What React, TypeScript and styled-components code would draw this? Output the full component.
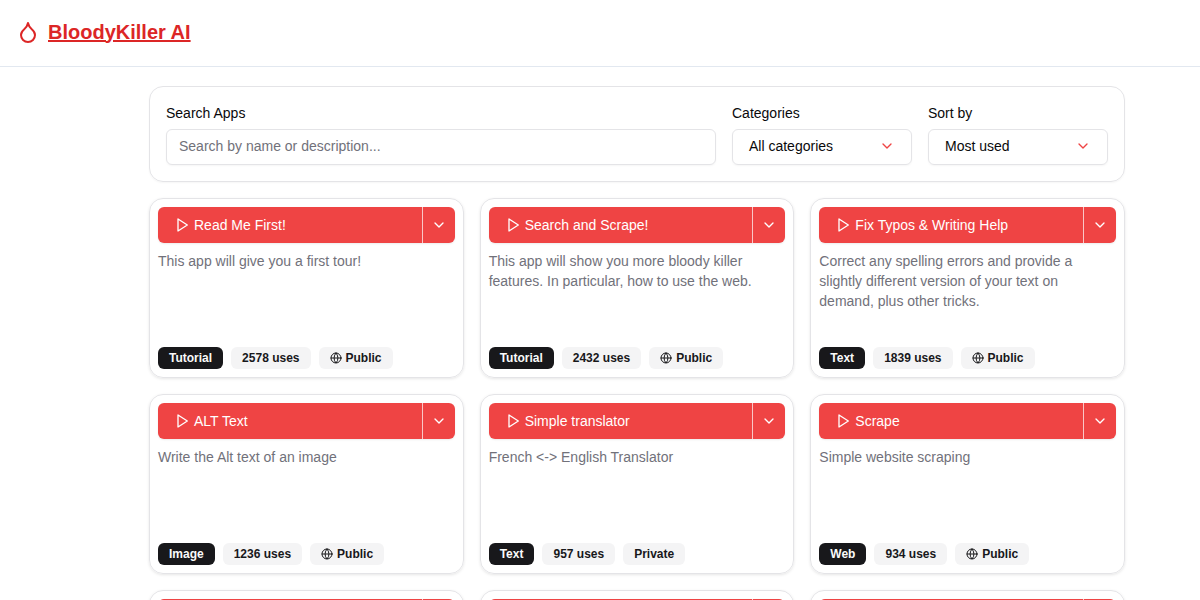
import React from "react";
import styled, { createGlobalStyle } from "styled-components";

const Global = createGlobalStyle`
  html, body { margin: 0; padding: 0; background: #fff; overflow: hidden; }
  * { box-sizing: border-box; }
  body { font-family: "Liberation Sans", Arial, sans-serif; color: #09090b; }
`;

const Page = styled.div`
  width: 1200px;
  height: 600px;
  overflow: hidden;
`;
const Header = styled.header`
  height: 67px;
  border-bottom: 1px solid #e2e8f0;
  display: flex;
  align-items: center;
  padding: 0 0 3px 16px;
  gap: 8px;
`;
const Brand = styled.a`
  font-size: 20px;
  font-weight: 700;
  line-height: 28px;
  color: #dc2626;
  text-decoration: underline;
`;
const Main = styled.main`
  width: 976px;
  margin: 19px 0 0 149px;
  display: flex;
  flex-direction: column;
  gap: 16px;
`;
const Filters = styled.section`
  height: 96px;
  border: 1px solid #e4e4e7;
  border-radius: 14px;
  box-shadow: 0 1px 2px rgba(0, 0, 0, 0.04);
  padding: 16px;
  display: grid;
  grid-template-columns: 550px 180px 180px;
  column-gap: 16px;
`;
const Field = styled.div`
  display: flex;
  flex-direction: column;
  gap: 6px;
`;
const Label = styled.label`
  font-size: 14px;
  line-height: 20px;
  color: #09090b;
`;
const Input = styled.input`
  height: 36px;
  border: 1px solid #e4e4e7;
  border-radius: 6px;
  padding: 0 12px 2px;
  font: 14px "Liberation Sans", Arial, sans-serif;
  box-shadow: 0 1px 2px rgba(0, 0, 0, 0.04);
  outline: none;
  &::placeholder { color: #71717a; opacity: 1; }
`;
const Select = styled.div`
  height: 36px;
  border: 1px solid #e4e4e7;
  border-radius: 6px;
  padding: 0 16px 2px;
  font-size: 14px;
  box-shadow: 0 1px 2px rgba(0, 0, 0, 0.04);
  display: flex;
  align-items: center;
  justify-content: space-between;
`;
const Grid = styled.div`
  display: grid;
  grid-template-columns: repeat(3, 1fr);
  gap: 16px;
`;
const Card = styled.article`
  height: 180px;
  border: 1px solid #e4e4e7;
  border-radius: 14px;
  box-shadow: 0 1px 3px rgba(0, 0, 0, 0.1);
  padding: 8px;
  display: flex;
  flex-direction: column;
`;
const ButtonRow = styled.div`
  height: 36px;
  display: flex;
  flex: none;
  background: #ef4444;
  border-radius: 6px;
  box-shadow: 0 1px 2px rgba(0, 0, 0, 0.08);
  color: #fff;
`;
const RunButton = styled.div`
  flex: 1;
  min-width: 0;
  display: flex;
  align-items: center;
  gap: 4px;
  padding-left: 16px;
  font-size: 14px;
`;
const MenuButton = styled.div`
  width: 33px;
  border-left: 1px solid rgba(255, 255, 255, 0.7);
  display: flex;
  align-items: center;
  justify-content: center;
`;
const Description = styled.p`
  margin: 8px 0 0;
  font-size: 14px;
  line-height: 20px;
  color: #71717a;
  flex: 1;
`;
const Badges = styled.div`
  display: flex;
  gap: 8px;
`;
const Badge = styled.span<{ $dark?: boolean }>`
  height: 22px;
  padding: 0 11px;
  border-radius: 6px;
  display: inline-flex;
  align-items: center;
  gap: 4px;
  font-size: 12px;
  font-weight: 700;
  background: ${(p) => (p.$dark ? "#18181b" : "#f4f4f5")};
  color: ${(p) => (p.$dark ? "#fafafa" : "#18181b")};
`;

const Drop = () => (
  <svg width="24" height="24" viewBox="0 0 24 24" fill="none" stroke="#dc2626" strokeWidth="2" strokeLinecap="round" strokeLinejoin="round">
    <path d="M12 22a7 7 0 0 0 7-7c0-2-1-3.9-3-5.5s-3.5-4-4-6.5c-.5 2.5-2 4.9-4 6.5C6 11.1 5 13 5 15a7 7 0 0 0 7 7z" />
  </svg>
);
const Chevron = ({ color = "#fff" }: { color?: string }) => (
  <svg width="16" height="16" viewBox="0 0 24 24" fill="none" stroke={color} strokeWidth="2" strokeLinecap="round" strokeLinejoin="round">
    <path d="m6 9 6 6 6-6" />
  </svg>
);
const Play = () => (
  <svg width="16" height="16" viewBox="0 0 24 24" fill="none" stroke="#fff" strokeWidth="2" strokeLinecap="round" strokeLinejoin="round">
    <polygon points="6 3 20 12 6 21 6 3" />
  </svg>
);
const Globe = () => (
  <svg width="12" height="12" viewBox="0 0 24 24" fill="none" stroke="#18181b" strokeWidth="2" strokeLinecap="round" strokeLinejoin="round">
    <circle cx="12" cy="12" r="10" />
    <path d="M12 2a14.5 14.5 0 0 0 0 20 14.5 14.5 0 0 0 0-20" />
    <path d="M2 12h20" />
  </svg>
);

type App = { name: string; desc: string; tag?: string; uses?: number; isPublic?: boolean };
const apps: App[] = [
  { name: "Read Me First!", desc: "This app will give you a first tour!", tag: "Tutorial", uses: 2578, isPublic: true },
  { name: "Search and Scrape!", desc: "This app will show you more bloody killer features. In particular, how to use the web.", tag: "Tutorial", uses: 2432, isPublic: true },
  { name: "Fix Typos & Writing Help", desc: "Correct any spelling errors and provide a slightly different version of your text on demand, plus other tricks.", tag: "Text", uses: 1839, isPublic: true },
  { name: "ALT Text", desc: "Write the Alt text of an image", tag: "Image", uses: 1236, isPublic: true },
  { name: "Simple translator", desc: "French <-> English Translator", tag: "Text", uses: 957, isPublic: false },
  { name: "Scrape", desc: "Simple website scraping", tag: "Web", uses: 934, isPublic: true },
  { name: "", desc: "" },
  { name: "", desc: "" },
  { name: "", desc: "" },
];

export default function App() {
  return (
    <Page>
      <Global />
      <Header>
        <Drop />
        <Brand href="#">BloodyKiller AI</Brand>
      </Header>
      <Main>
        <Filters>
          <Field>
            <Label>Search Apps</Label>
            <Input placeholder="Search by name or description..." />
          </Field>
          <Field>
            <Label>Categories</Label>
            <Select>All categories<Chevron color="#ef4444" /></Select>
          </Field>
          <Field>
            <Label>Sort by</Label>
            <Select>Most used<Chevron color="#ef4444" /></Select>
          </Field>
        </Filters>
        <Grid>
          {apps.map((a, i) => (
            <Card key={i}>
              <ButtonRow>
                <RunButton>
                  <Play />
                  {a.name}
                </RunButton>
                <MenuButton><Chevron /></MenuButton>
              </ButtonRow>
              <Description>{a.desc}</Description>
              {a.tag && (
                <Badges>
                  <Badge $dark>{a.tag}</Badge>
                  <Badge>{a.uses} uses</Badge>
                  <Badge>
                    {a.isPublic && <Globe />}
                    {a.isPublic ? "Public" : "Private"}
                  </Badge>
                </Badges>
              )}
            </Card>
          ))}
        </Grid>
      </Main>
    </Page>
  );
}
